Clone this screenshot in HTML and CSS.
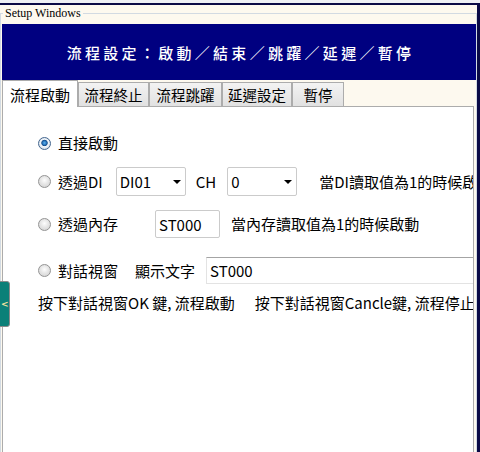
FILE: index.html
```html
<!DOCTYPE html>
<html lang="zh-Hant">
<head>
<meta charset="utf-8">
<title>Setup Windows</title>
<link rel="stylesheet" href="styles.css">
</head>
<body>
<div class="window">
  <fieldset class="group">
    <legend class="group-legend">Setup Windows</legend>
    <div class="title">流程設定：啟動／結束／跳躍／延遲／暫停</div>
    <div class="tabs">
      <div class="tab tab-active w1">流程啟動</div>
      <div class="tab w2">流程終止</div>
      <div class="tab w3">流程跳躍</div>
      <div class="tab w4">延遲設定</div>
      <div class="tab w5">暫停</div>
    </div>
    <div class="panel">
      <div class="row r1">
        <input type="radio" name="start" class="radio" checked>
        <span>直接啟動</span>
      </div>
      <div class="row r2">
        <input type="radio" name="start" class="radio">
        <span>透過DI</span>
        <div class="select sel-di"><span>DI01</span><span class="caret"></span></div>
        <span class="ch">CH</span>
        <div class="select sel-ch"><span>0</span><span class="caret"></span></div>
        <span class="msg-di">當DI讀取值為1的時候啟動</span>
      </div>
      <div class="row r3">
        <input type="radio" name="start" class="radio">
        <span>透過內存</span>
        <input class="field field-st" type="text" value="ST000">
        <span class="msg-st">當內存讀取值為1的時候啟動</span>
      </div>
      <div class="row r4">
        <input type="radio" name="start" class="radio">
        <span>對話視窗</span>
        <span class="lbl-show">顯示文字</span>
        <input class="field field-wide" type="text" value="ST000">
      </div>
      <div class="row r5">
        <span>按下對話視窗OK 鍵, 流程啟動</span>
        <span class="msg-cancel">按下對話視窗Cancle鍵, 流程停止</span>
      </div>
    </div>
  </fieldset>
  <div class="side-handle">&lt;</div>
</div>
</body>
</html>
```
FILE: styles.css
```css
html, body {
  margin: 0;
  padding: 0;
}
body {
  background: #eef0f4;
  overflow: hidden;
  font-family: "Noto Sans CJK TC", "Noto Sans", sans-serif;
  color: #000;
}
.window {
  position: relative;
  margin-top: 3px;
  width: 477px;
  height: 447px;
  border-top: 2px solid #0a0a46;
  border-right: 3px solid #0a0a46;
  background: #fdf9ef;
  overflow: hidden;
}
.group {
  margin: 1px 0 0 0;
  padding: 0 0 0 1px;
  border: 1px solid #d2dae2;
  min-width: 0;
  height: 520px;
  box-sizing: border-box;
}
.group-legend {
  margin-left: 1px;
  padding: 0 2px;
  font: 12px/14px "Liberation Serif", serif;
  color: #000;
}
.title {
  margin-top: 4px;
  height: 56px;
  background: #000080;
  color: #fff;
  display: flex;
  align-items: center;
  justify-content: center;
  font-size: 15px;
  letter-spacing: 3.3px;
  padding-left: 3px;
  font-weight: 500;
}
.tabs {
  display: flex;
  align-items: flex-end;
  height: 26px;
}
.tab {
  box-sizing: border-box;
  height: 24px;
  border: 1px solid #acacac;
  border-bottom: none;
  background: linear-gradient(#f3f3f3, #e1e1e1);
  font-size: 14.5px;
  display: flex;
  align-items: center;
  justify-content: center;
  white-space: nowrap;
}
.tab-active {
  height: 27px;
  margin-bottom: -1px;
  background: #fff;
  position: relative;
  z-index: 1;
  font-size: 15px;
}
.w1 { width: 76px; }
.w2 { width: 71px; }
.w3 { width: 73px; }
.w4 { width: 70px; }
.w5 { width: 52px; }
.panel {
  margin-right: 2px;
  height: 380px;
  box-sizing: border-box;
  border: 1px solid #acacac;
  background: #fff;
  padding: 22px 0 0 35px;
  overflow: hidden;
}
.row {
  display: flex;
  align-items: center;
  white-space: nowrap;
  font-size: 15px;
  line-height: 20px;
}
.r1 { height: 28px; }
.r2 { height: 29px; margin-top: 10px; }
.r3 { height: 28px; margin-top: 14px; }
.r4 { height: 27px; margin-top: 19px; }
.r5 { height: 20px; margin-top: 9px; }
.radio {
  appearance: none;
  -webkit-appearance: none;
  flex: none;
  width: 13px;
  height: 13px;
  margin: 0 7px 0 0;
  border-radius: 50%;
  border: 1px solid #949494;
  box-sizing: border-box;
  background: radial-gradient(circle at 50% 40%, #fdfdfd 0, #e6e6e6 45%, #cfcfcf 100%);
}
.radio:checked {
  border-color: #44678f;
  background: radial-gradient(circle at 50% 45%, #5fb4ee 0, #2a78c0 1.8px, #164f8c 2.8px, #f4f8fc 3.6px, #dce4ec 5.5px);
}
.select {
  flex: none;
  width: 70px;
  height: 29px;
  box-sizing: border-box;
  border: 1px solid #cbcbcb;
  border-radius: 2px;
  background: #fff;
  display: flex;
  align-items: center;
  justify-content: space-between;
  padding: 0 4px 0 3px;
}
.caret {
  width: 0;
  height: 0;
  border-left: 4px solid transparent;
  border-right: 4px solid transparent;
  border-top: 4px solid #000;
}
.sel-di { margin-left: 13px; }
.ch { margin-left: 10px; }
.sel-ch { margin-left: 11px; }
.msg-di { margin-left: 22px; }
.field {
  flex: none;
  box-sizing: border-box;
  font: 15px/20px "Noto Sans CJK TC", "Noto Sans", sans-serif;
  color: #000;
  padding: 0 3px;
  margin: 0;
  background: #fff;
  outline: none;
}
.field-st {
  margin-left: 37px;
  width: 65px;
  height: 28px;
  border: 1px solid #cbcbcb;
  border-radius: 2px;
}
.msg-st { margin-left: 11px; }
.lbl-show { margin-left: 17px; }
.field-wide {
  margin-left: 11px;
  width: 300px;
  height: 27px;
  border: 1px solid #e3e3e3;
  border-top-color: #a4a4a4;
}
.msg-cancel { margin-left: 20px; }
.side-handle {
  position: absolute;
  left: -6px;
  top: 276px;
  width: 16px;
  height: 46px;
  box-sizing: border-box;
  border: 1px solid #8a8a8a;
  border-radius: 3px;
  background: #0b8078;
  color: #f3e3a0;
  font: bold 9px/44px "DejaVu Sans", sans-serif;
  padding-left: 6px;
}
```
